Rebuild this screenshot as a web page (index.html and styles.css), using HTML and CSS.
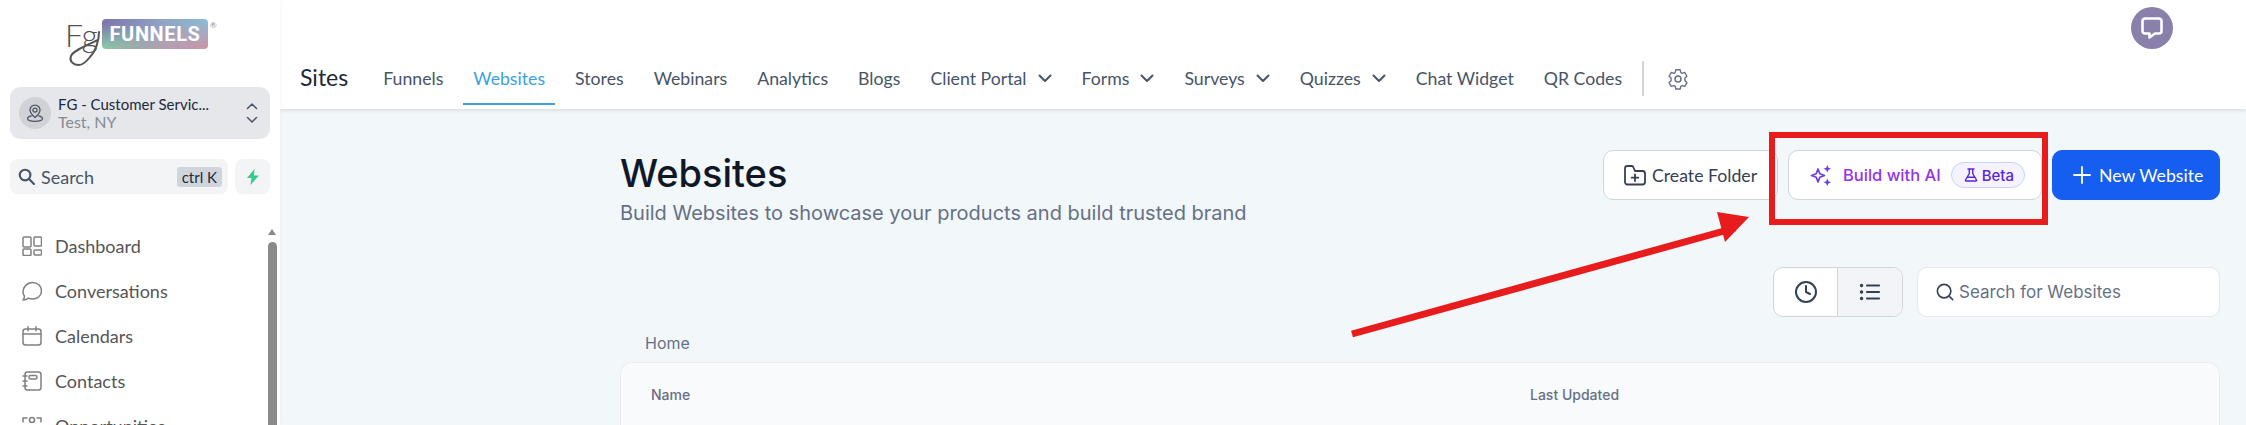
FILE: index.html
```html
<!DOCTYPE html>
<html>
  <head>
    <meta charset="utf-8">
    <title>Websites</title>
    <link rel="stylesheet" href="styles.css">
  </head>
  <body>
    <aside class="sidebar">
      <div class="logo">
        <div class="logo-fg">
          <span class="logo-script">Fg</span>
          <svg class="logo-loop" width="40" height="50" viewBox="0 0 40 50" fill="none" stroke="#555" stroke-width="2" stroke-linecap="round">
            <path d="M34 14C34 24 30 34 25 39C21 44 18 47 14 47C8 47 4 43 6 38C8 33 20 28 33 22"/>
          </svg>
        </div>
        <div class="logo-badge">FUNNELS</div>
        <span class="logo-reg">®</span>
      </div>

      <div class="location">
        <div class="location-avatar">
          <svg width="20" height="20" viewBox="0 0 24 24" fill="none" stroke="#4b5563" stroke-width="1.500" stroke-linecap="round" stroke-linejoin="round">
            <circle cx="12" cy="8.500" r="2.500"/>
            <path d="M12 17.500c-3-2.500-6-5-6-9a6 6 0 0 1 12 0c0 4-3 6.500-6 9z"/>
            <path d="M7.500 15.500C4.500 16.300 3 17.300 3 18.700 3 20.600 7 22 12 22s9-1.400 9-3.300c0-1.400-1.500-2.400-4.500-3.200"/>
          </svg>
        </div>
        <div class="location-text">
          <div class="location-name">FG - Customer Servic...</div>
          <div class="location-place">Test, NY</div>
        </div>
        <svg class="location-arrows" width="12" height="22" viewBox="0 0 12 22" fill="none" stroke="#4b5563" stroke-width="1.500" stroke-linecap="round" stroke-linejoin="round">
          <path d="M1.500 6.500L6 2l4.500 4.500"/>
          <path d="M1.500 15.500L6 20l4.500-4.500"/>
        </svg>
      </div>

      <div class="search-row">
        <div class="side-search">
          <svg width="17" height="17" viewBox="0 0 24 24" fill="none" stroke="#475467" stroke-width="3" stroke-linecap="round">
            <circle cx="10" cy="10" r="7.500"/>
            <path d="M16 16l6.500 6.500"/>
          </svg>
          <span class="side-search-label">Search</span>
          <span class="kbd">ctrl K</span>
        </div>
        <div class="bolt">
          <svg width="14" height="16" viewBox="0 0 14 16"><path d="M8.500 0L1 9h4.500L4.500 16 13 6.500H8z" fill="#37ca8e"/></svg>
        </div>
      </div>

      <div class="side-nav">
        <ul class="nav-list">
          <li class="nav-item">
            <svg class="nav-icon" viewBox="0 0 20 20" fill="none" stroke="#808080" stroke-width="1.500">
              <rect x="1" y="1" width="8" height="10" rx="1"/><rect x="12" y="1" width="7.500" height="9" rx="1"/>
              <rect x="1" y="13" width="8" height="6.500" rx="1"/><rect x="12" y="14" width="7.500" height="5" rx="1"/>
            </svg>
            Dashboard
          </li>
          <li class="nav-item">
            <svg class="nav-icon" viewBox="0 0 20 20" fill="none" stroke="#808080" stroke-width="1.500" stroke-linejoin="round">
              <path d="M1 19c1-1 1.500-2.500 1.300-4C1.500 13.800 1 12.400 1 11 1 6 5 1.500 10.500 1.500S19.500 5.500 19.500 10 15.500 18 10.500 18c-1.500 0-2.800-.3-4-.9C5 18.300 3 19 1 19z"/>
            </svg>
            Conversations
          </li>
          <li class="nav-item">
            <svg class="nav-icon" viewBox="0 0 20 20" fill="none" stroke="#808080" stroke-width="1.500" stroke-linecap="round">
              <rect x="1" y="3" width="18" height="16" rx="2.500"/><path d="M1 8h18M6 .8v4M14 .8v4"/>
            </svg>
            Calendars
          </li>
          <li class="nav-item">
            <svg class="nav-icon" viewBox="0 0 20 20" fill="none" stroke="#808080" stroke-width="1.500" stroke-linecap="round">
              <rect x="3" y="1" width="16" height="18" rx="2.500"/><rect x="7" y="4.500" width="8" height="3.500" rx="1.500"/>
              <path d="M1 5h4M1 10h4M1 15h4"/>
            </svg>
            Contacts
          </li>
          <li class="nav-item">
            <svg class="nav-icon" viewBox="0 0 20 20" fill="none" stroke="#808080" stroke-width="1.500" stroke-linecap="round">
              <circle cx="10" cy="4" r="2.500"/><path d="M1 2h4M1 2v4M19 2h-4M19 2v4M5 18c0-4 2-6 5-6s5 2 5 6"/>
            </svg>
            Opportunities
          </li>
        </ul>
        <div class="side-scroll">
          <div class="side-scroll-arrow"></div>
          <div class="side-scroll-thumb"></div>
        </div>
      </div>
    </aside>

    <div class="page">
      <header class="header">
        <div class="top-bar">
          <div class="chat-bubble">
            <svg width="24" height="24" viewBox="0 0 24 24" fill="none" stroke="#fff" stroke-width="2.600" stroke-linejoin="round">
              <path d="M5 2.500h14a2.500 2.500 0 0 1 2.500 2.500v10a2.500 2.500 0 0 1-2.500 2.500h-4L9.500 21.500V17.500H5A2.500 2.500 0 0 1 2.500 15V5A2.500 2.500 0 0 1 5 2.500z"/>
            </svg>
          </div>
        </div>
        <nav class="tabs">
          <span class="tabs-title">Sites</span>
          <a class="tab">Funnels</a>
          <a class="tab active">Websites</a>
          <a class="tab">Stores</a>
          <a class="tab">Webinars</a>
          <a class="tab">Analytics</a>
          <a class="tab">Blogs</a>
          <a class="tab">Client Portal
            <svg class="chev" width="14" height="9" viewBox="0 0 14 9" fill="none" stroke="#475467" stroke-width="2" stroke-linecap="round" stroke-linejoin="round"><path d="M1.500 1.500L7 7l5.500-5.500"/></svg>
          </a>
          <a class="tab">Forms
            <svg class="chev" width="14" height="9" viewBox="0 0 14 9" fill="none" stroke="#475467" stroke-width="2" stroke-linecap="round" stroke-linejoin="round"><path d="M1.500 1.500L7 7l5.500-5.500"/></svg>
          </a>
          <a class="tab">Surveys
            <svg class="chev" width="14" height="9" viewBox="0 0 14 9" fill="none" stroke="#475467" stroke-width="2" stroke-linecap="round" stroke-linejoin="round"><path d="M1.500 1.500L7 7l5.500-5.500"/></svg>
          </a>
          <a class="tab">Quizzes
            <svg class="chev" width="14" height="9" viewBox="0 0 14 9" fill="none" stroke="#475467" stroke-width="2" stroke-linecap="round" stroke-linejoin="round"><path d="M1.500 1.500L7 7l5.500-5.500"/></svg>
          </a>
          <a class="tab">Chat Widget</a>
          <a class="tab">QR Codes</a>
          <span class="tabs-divider"></span>
          <svg class="gear" width="24" height="24" viewBox="0 0 24 24" fill="none" stroke="#667085" stroke-width="1.500" stroke-linejoin="round">
            <circle cx="12" cy="12" r="3"/>
            <path d="M9.600 2.500h4.800l.6 2.900 1.500.9 2.800-.9 2.400 4.100-2.200 2v2.900l2.200 2-2.400 4.100-2.800-.9-1.500.9-.6 2.900H9.600L9 20.500l-1.500-.9-2.800.9-2.400-4.100 2.200-2v-2.900l-2.200-2 2.400-4.100 2.800.9L9 5.400z" transform="translate(12 12) scale(.92) translate(-12 -12.500)"/>
          </svg>
        </nav>
      </header>

      <main class="content">
        <div class="title-row">
          <div>
            <h1 class="page-title">Websites</h1>
            <p class="page-sub">Build Websites to showcase your products and build trusted brand</p>
          </div>
          <div class="actions">
            <button class="btn btn-folder">
              <svg width="24" height="24" viewBox="0 0 24 24" fill="none" stroke="#344054" stroke-width="1.800" stroke-linecap="round" stroke-linejoin="round">
                <path d="M2 6.500V19a2.500 2.500 0 0 0 2.500 2.500h15A2.500 2.500 0 0 0 22 19v-8.500A2.500 2.500 0 0 0 19.500 8H12l-1.500-3.500A2 2 0 0 0 8.700 3H4.500A2.500 2.500 0 0 0 2 5.500z"/>
                <path d="M12 11.500v6.500M8.700 14.700h6.600"/>
              </svg>
              Create Folder
            </button>
            <button class="btn btn-ai">
              <svg width="22" height="22" viewBox="0 0 22 22" fill="#6d3fe0">
                <path d="M8 5l1.800 4.700L14.500 11.500 9.800 13.300 8 18l-1.800-4.700L1.500 11.500l4.700-1.800z" fill="none" stroke="#6d3fe0" stroke-width="1.700" stroke-linejoin="round"/>
                <path d="M17.300 1l1.100 2.700 2.600 1.100-2.600 1.100-1.100 2.700-1.100-2.700-2.600-1.100 2.600-1.100z"/>
                <path d="M17.300 14.500l1.100 2.700 2.600 1.100-2.600 1.100-1.100 2.600-1.100-2.600-2.600-1.100 2.600-1.100z"/>
              </svg>
              <span class="ai-label">Build with AI</span>
              <span class="beta">
                <svg width="14" height="14" viewBox="0 0 14 14" fill="none" stroke="#5925dc" stroke-width="1.400" stroke-linecap="round" stroke-linejoin="round">
                  <path d="M4 1h6M5.300 1v4.500L1.500 12a.7.7 0 0 0 .6 1h9.800a.7.7 0 0 0 .6-1L8.700 5.500V1M3.500 9.300h7"/>
                </svg>
                Beta
              </span>
            </button>
            <button class="btn btn-new">
              <svg width="18" height="18" viewBox="0 0 18 18" fill="none" stroke="#fff" stroke-width="1.800" stroke-linecap="round"><path d="M9 1v16M1 9h16"/></svg>
              New Website
            </button>
          </div>
        </div>

        <div class="tools-row">
          <div class="view-toggle">
            <span class="view-btn">
              <svg width="24" height="24" viewBox="0 0 24 24" fill="none" stroke="#344054" stroke-width="2" stroke-linecap="round" stroke-linejoin="round">
                <circle cx="12" cy="12" r="10"/><path d="M12 6v6l4 2"/>
              </svg>
            </span>
            <span class="view-btn selected">
              <svg width="24" height="24" viewBox="0 0 24 24" fill="none" stroke="#344054" stroke-width="2.200" stroke-linecap="round">
                <path d="M9 5.500h12M9 12h12M9 18.500h12"/>
                <path d="M3.500 5.500h.1M3.500 12h.1M3.500 18.500h.1" stroke-width="3.400"/>
              </svg>
            </span>
          </div>
          <div class="site-search">
            <svg width="18" height="18" viewBox="0 0 20 20" fill="none" stroke="#344054" stroke-width="1.800" stroke-linecap="round">
              <circle cx="9" cy="9" r="7.500"/><path d="M14.500 14.500l4 4"/>
            </svg>
            <span>Search for Websites</span>
          </div>
        </div>

        <div class="crumb">Home</div>

        <div class="table-card">
          <div class="table-head">
            <span class="col-name">Name</span>
            <span class="col-updated">Last Updated</span>
          </div>
        </div>
      </main>
    </div>

    <svg class="annot-arrow" width="420" height="135" viewBox="0 0 420 135">
      <line x1="2" y1="125" x2="385" y2="19" stroke="#e81c1c" stroke-width="7"/>
      <polygon points="399,8 367,3 375,33" fill="#e81c1c"/>
    </svg>
    <div class="annot-box"></div>
  </body>
</html>
```

FILE: styles.css
```css
* { box-sizing: border-box; }
html, body { margin: 0; height: 425px; overflow: hidden; }
body {
  display: flex;
  background: #f2f7fa;
  font-family: "Lato", sans-serif;
  color: #344054;
}

/* sidebar */
.sidebar {
  width: 280px;
  flex: none;
  background: #fff;
  padding: 0 10px;
  z-index: 2;
  box-shadow: 1px 0 3px rgba(0, 0, 0, .03);
}
.logo {
  display: flex;
  align-items: flex-start;
  height: 87px;
  padding: 18px 0 0 55px;
}
.logo-fg { width: 37px; height: 60px; position: relative; }
.logo-script {
  display: block;
  font: 300 32px/32px "Lato", sans-serif;
  color: #4f4f4f;
  margin-top: 1px;
}
.logo-loop { position: absolute; left: 0; top: 0; }
.logo-badge {
  width: 106px;
  height: 30px;
  border-radius: 4px;
  margin-top: 1px;
  background:
    radial-gradient(ellipse at 100% 100%, #cc93a6 0, rgba(204, 147, 166, 0) 65%),
    radial-gradient(ellipse at 0 100%, #8ecca6 0, rgba(142, 204, 166, 0) 60%),
    linear-gradient(90deg, #7d74ad, #8fa3c4 55%, #8dbcd4);
  color: #fff;
  font: 700 20px/30px "Roboto", sans-serif;
  letter-spacing: .6px;
  text-align: center;
}
.logo-reg { font-size: 8px; color: #8a8a8a; margin: 2px 0 0 2px; }

.location {
  display: flex;
  align-items: center;
  height: 52px;
  background: #e5e7eb;
  border-radius: 10px;
  padding: 0 12px 0 9px;
}
.location-avatar {
  width: 32px;
  height: 32px;
  border-radius: 50%;
  background: #d0d2d6;
  display: flex;
  align-items: center;
  justify-content: center;
  margin-right: 7px;
}
.location-text { flex: 1; line-height: 18px; }
.location-name { font-size: 15px; color: #1d2939; }
.location-place { font-size: 16px; color: #858b96; }

.search-row { display: flex; gap: 7px; margin-top: 20px; }
.side-search {
  flex: 1;
  height: 35px;
  display: flex;
  align-items: center;
  background: #f3f4f6;
  border-radius: 8px;
  padding: 0 6px 0 8px;
  font-size: 18px;
  color: #475467;
}
.side-search-label { flex: 1; margin-left: 6px; }
.kbd {
  background: #d0d5dd;
  border-radius: 3px;
  font-size: 15px;
  line-height: 20px;
  padding: 0 5px;
  color: #1d2939;
}
.bolt {
  width: 35px;
  height: 35px;
  background: #f3f4f6;
  border-radius: 8px;
  display: flex;
  align-items: center;
  justify-content: center;
}

.side-nav { display: flex; margin-top: 29px; }
.nav-list { flex: 1; list-style: none; margin: 0; padding: 0 0 0 12px; }
.nav-item {
  display: flex;
  align-items: center;
  height: 45px;
  font-size: 18px;
  color: #555;
}
.nav-icon { width: 20px; height: 20px; margin-right: 13px; flex: none; }
.side-scroll { width: 9px; margin: 6px -7px 0 0; }
.side-scroll-arrow {
  width: 0;
  height: 0;
  border-left: 4.500px solid transparent;
  border-right: 4.500px solid transparent;
  border-bottom: 6px solid #8a8a8a;
}
.side-scroll-thumb {
  height: 200px;
  margin-top: 7px;
  background: #8a8a8a;
  border-radius: 5px 5px 0 0;
}

/* top header */
.page { flex: 1; min-width: 0; display: flex; flex-direction: column; }
.header {
  height: 109px;
  background: #fff;
  box-shadow: 0 1px 4px rgba(16, 24, 40, .14);
}
.top-bar {
  height: 57px;
  display: flex;
  justify-content: flex-end;
  padding: 7px 73px 0 0;
}
.chat-bubble {
  width: 42px;
  height: 42px;
  border-radius: 50%;
  background: #8a80ac;
  display: flex;
  align-items: center;
  justify-content: center;
}
.tabs { display: flex; align-items: stretch; height: 52px; padding-left: 20px; }
.tabs-title { font-size: 23px; line-height: 40px; color: #1d2939; margin-right: 25px; }
.tab {
  display: flex;
  align-items: center;
  height: 48px;
  padding: 0 10px 4px;
  margin-right: 10px;
  font-size: 17.700px;
  color: #475467;
  border-bottom: 2px solid transparent;
}
.tab.active { color: #3b9fe0; border-bottom-color: #3b9fe0; }
.chev { margin-left: 11px; }
.tabs-divider { width: 2px; height: 35px; margin: 4px 0 0 0; background: #d0d5dd; }
.gear { margin: 10px 0 0 22px; }

/* main part */
.content { flex: 1; padding: 41px 26px 0 340px; font-family: "Inter", sans-serif; }
.title-row { display: flex; justify-content: space-between; }
.page-title {
  margin: 0;
  font-size: 38px;
  line-height: 46px;
  font-weight: 500;
  color: #101828;
}
.page-sub { margin: 3px 0 0; font-size: 20px; line-height: 28px; color: #667085; }
.actions { display: flex; gap: 10px; }
.btn {
  height: 50px;
  display: flex;
  align-items: center;
  border: 1px solid #d0d5dd;
  border-radius: 10px;
  background: #fff;
  font: 17.700px "Lato", sans-serif;
  color: #344054;
}
.btn-folder { width: 175px; padding: 0 0 0 19px; gap: 5px; }
.btn-ai { width: 254px; padding: 0 0 0 21px; font: 500 16.500px "Inter", sans-serif; }
.ai-label { margin-left: 11px; color: #9333ea; }
.beta {
  display: flex;
  align-items: center;
  gap: 4px;
  height: 26px;
  margin-left: 10px;
  padding: 0 10px 0 12px;
  border: 1px solid #c3d4fb;
  border-radius: 13px;
  background: #f5f3ff;
  font-size: 15px;
  color: #5925dc;
}
.btn-new {
  width: 168px;
  padding: 0 0 0 20px;
  gap: 8px;
  background: #155eef;
  border-color: #155eef;
  color: #fff;
}

.tools-row { display: flex; justify-content: flex-end; gap: 14px; margin-top: 40px; }
.view-toggle {
  display: flex;
  height: 50px;
  border: 1px solid #d0d5dd;
  border-radius: 10px;
  background: #fff;
  overflow: hidden;
}
.view-btn {
  width: 63px;
  display: flex;
  align-items: center;
  justify-content: center;
}
.view-btn.selected { width: 65px; background: #f2f4f7; border-left: 1px solid #d0d5dd; }
.site-search {
  width: 303px;
  height: 50px;
  display: flex;
  align-items: center;
  gap: 5px;
  padding-left: 18px;
  border: 1px solid #e4e7ec;
  border-radius: 10px;
  background: #fff;
  font-size: 17px;
  color: #667085;
}

.crumb { margin: 16px 0 0 25px; font-size: 16px; line-height: 20px; color: #667085; }
.table-card {
  height: 120px;
  margin-top: 9px;
  background: #f9fafb;
  border: 1px solid #eaecf0;
  border-radius: 12px;
}
.table-head {
  display: flex;
  padding-top: 22px;
  font-size: 14px;
  line-height: 20px;
  font-weight: 500;
  color: #667085;
}
.col-name { width: 879px; margin-left: 30px; }

/* red marks drawn over the screenshot */
.annot-box {
  position: absolute;
  left: 1769px;
  top: 132px;
  width: 279px;
  height: 93px;
  border: 6px solid #e81c1c;
}
.annot-arrow { position: absolute; left: 1350px; top: 209px; }
```
